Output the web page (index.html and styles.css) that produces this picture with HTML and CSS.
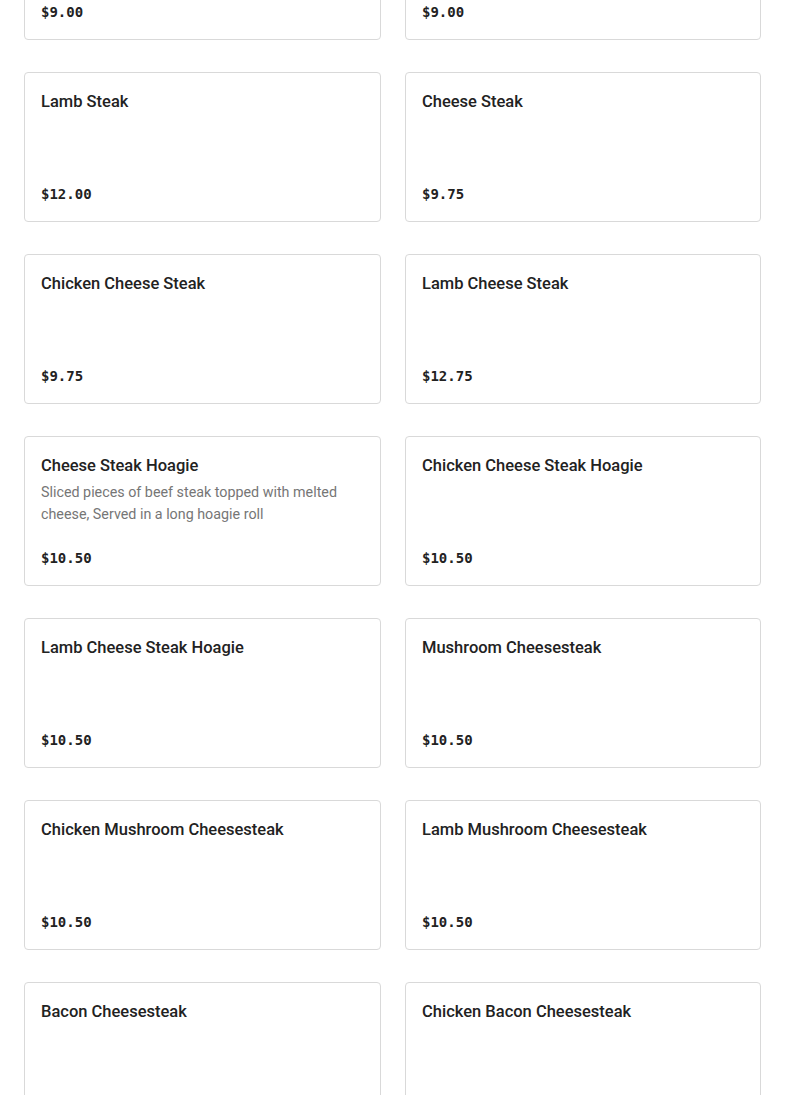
FILE: index.html
```html
<!DOCTYPE HTML>
<html lang="en">
<head>
	<meta charset="utf-8">
	<title>Menu</title>
	<link rel="stylesheet" href="styles.css">
</head>
<body>
	<div class="menu">
		<div class="item">
			<h3 class="item-name">Beef Steak</h3>
			<p class="item-price">$9.00</p>
		</div>
		<div class="item">
			<h3 class="item-name">Chicken Steak</h3>
			<p class="item-price">$9.00</p>
		</div>
		<div class="item">
			<h3 class="item-name">Lamb Steak</h3>
			<p class="item-price">$12.00</p>
		</div>
		<div class="item">
			<h3 class="item-name">Cheese Steak</h3>
			<p class="item-price">$9.75</p>
		</div>
		<div class="item">
			<h3 class="item-name">Chicken Cheese Steak</h3>
			<p class="item-price">$9.75</p>
		</div>
		<div class="item">
			<h3 class="item-name">Lamb Cheese Steak</h3>
			<p class="item-price">$12.75</p>
		</div>
		<div class="item">
			<h3 class="item-name">Cheese Steak Hoagie</h3>
			<p class="item-desc">Sliced pieces of beef steak topped with melted cheese, Served in a long hoagie roll</p>
			<p class="item-price">$10.50</p>
		</div>
		<div class="item">
			<h3 class="item-name">Chicken Cheese Steak Hoagie</h3>
			<p class="item-price">$10.50</p>
		</div>
		<div class="item">
			<h3 class="item-name">Lamb Cheese Steak Hoagie</h3>
			<p class="item-price">$10.50</p>
		</div>
		<div class="item">
			<h3 class="item-name">Mushroom Cheesesteak</h3>
			<p class="item-price">$10.50</p>
		</div>
		<div class="item">
			<h3 class="item-name">Chicken Mushroom Cheesesteak</h3>
			<p class="item-price">$10.50</p>
		</div>
		<div class="item">
			<h3 class="item-name">Lamb Mushroom Cheesesteak</h3>
			<p class="item-price">$10.50</p>
		</div>
		<div class="item">
			<h3 class="item-name">Bacon Cheesesteak</h3>
			<p class="item-price">$10.50</p>
		</div>
		<div class="item">
			<h3 class="item-name">Chicken Bacon Cheesesteak</h3>
			<p class="item-price">$10.50</p>
		</div>
	</div>
</body>
</html>
```

FILE: styles.css
```css
body {
	margin:0;
	background:#fff;
	color:#222;
	font-family:Roboto, "Noto Sans", sans-serif;
	}

/* Menu grid, scrolled so the first row shows only its bottom */
.menu {
	display:grid;
	grid-template-columns:357px 356px;
	column-gap:24px;
	row-gap:32px;
	margin-top:-110px;
	padding:0 24px;
	}

/* Item card */
.item {
	display:flex;
	flex-direction:column;
	box-sizing:border-box;
	height:150px;
	padding:16px;
	border:1px solid #d9d9d9;
	border-radius:4px;
	background:#fff;
	}
	.item-name {
		margin:0;
		padding-top:1px;
		font-size:16.5px;
		font-weight:500;
		line-height:24px;
		color:#222;
		}
	.item-desc {
		margin:3px 0 0;
		font-size:14.3px;
		line-height:22px;
		color:#767676;
		}
	.item-price {
		margin:auto 0 0;
		font-family:"DejaVu Sans Mono", "Liberation Mono", monospace;
		font-size:14px;
		font-weight:bold;
		line-height:22px;
		color:#222;
		}
```
